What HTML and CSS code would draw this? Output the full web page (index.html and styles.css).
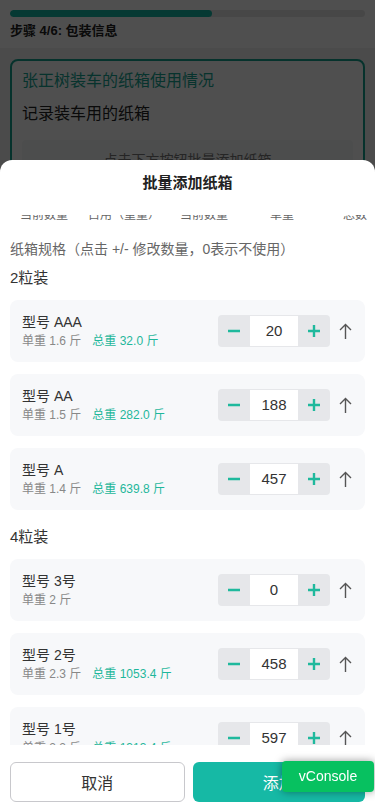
FILE: index.html
```html
<!DOCTYPE html>
<html lang="zh-CN">
<head>
<meta charset="utf-8">
<meta name="viewport" content="width=device-width, initial-scale=1">
<title>批量添加纸箱</title>
<link rel="stylesheet" href="styles.css">
</head>
<body>
<div class="page">
  <header class="topbar">
    <div class="progress"><div class="progress-fill" style="width:57%"></div></div>
    <div class="step">步骤 4/6: 包装信息</div>
  </header>
  <main class="content">
    <section class="info-card">
      <h2 class="info-title">张正树装车的纸箱使用情况</h2>
      <p class="info-sub">记录装车用的纸箱</p>
      <div class="info-box">点击下方按钮批量添加纸箱</div>
    </section>
  </main>
</div>

<div class="mask"></div>

<div class="sheet">
  <div class="sheet-head">批量添加纸箱</div>
  <div class="sheet-body">
    <div class="tabs">
      <span>当前数量</span>
      <span>占用（重量）</span>
      <span>当前数量</span>
      <span>单重</span>
      <span>总数</span>
    </div>
    <div class="hint">纸箱规格（点击 +/- 修改数量，0表示不使用）</div>

    <div class="group-title">2粒装</div>
    <div class="list">
      <div class="item">
        <div class="item-info">
          <div class="item-name">型号 AAA</div>
          <div class="item-sub"><span>单重 1.6 斤</span><span class="total">总重 32.0 斤</span></div>
        </div>
        <div class="stepper">
          <button class="step-btn"><svg width="12" height="12" viewBox="0 0 12 12"><path d="M0 6H12" stroke="currentColor" stroke-width="2.4"/></svg></button>
          <div class="step-val">20</div>
          <button class="step-btn"><svg width="12" height="12" viewBox="0 0 12 12"><path d="M0 6H12M6 0V12" stroke="currentColor" stroke-width="2.4"/></svg></button>
        </div>
        <svg class="up" width="13" height="16" viewBox="0 0 13 16"><path d="M6.5 1.5V16M1 7L6.5 1.5L12 7" fill="none" stroke="currentColor" stroke-width="1.4"/></svg>
      </div>
      <div class="item">
        <div class="item-info">
          <div class="item-name">型号 AA</div>
          <div class="item-sub"><span>单重 1.5 斤</span><span class="total">总重 282.0 斤</span></div>
        </div>
        <div class="stepper">
          <button class="step-btn"><svg width="12" height="12" viewBox="0 0 12 12"><path d="M0 6H12" stroke="currentColor" stroke-width="2.4"/></svg></button>
          <div class="step-val">188</div>
          <button class="step-btn"><svg width="12" height="12" viewBox="0 0 12 12"><path d="M0 6H12M6 0V12" stroke="currentColor" stroke-width="2.4"/></svg></button>
        </div>
        <svg class="up" width="13" height="16" viewBox="0 0 13 16"><path d="M6.5 1.5V16M1 7L6.5 1.5L12 7" fill="none" stroke="currentColor" stroke-width="1.4"/></svg>
      </div>
      <div class="item">
        <div class="item-info">
          <div class="item-name">型号 A</div>
          <div class="item-sub"><span>单重 1.4 斤</span><span class="total">总重 639.8 斤</span></div>
        </div>
        <div class="stepper">
          <button class="step-btn"><svg width="12" height="12" viewBox="0 0 12 12"><path d="M0 6H12" stroke="currentColor" stroke-width="2.4"/></svg></button>
          <div class="step-val">457</div>
          <button class="step-btn"><svg width="12" height="12" viewBox="0 0 12 12"><path d="M0 6H12M6 0V12" stroke="currentColor" stroke-width="2.4"/></svg></button>
        </div>
        <svg class="up" width="13" height="16" viewBox="0 0 13 16"><path d="M6.5 1.5V16M1 7L6.5 1.5L12 7" fill="none" stroke="currentColor" stroke-width="1.4"/></svg>
      </div>
    </div>

    <div class="group-title group-next">4粒装</div>
    <div class="list">
      <div class="item">
        <div class="item-info">
          <div class="item-name">型号 3号</div>
          <div class="item-sub"><span>单重 2 斤</span></div>
        </div>
        <div class="stepper">
          <button class="step-btn"><svg width="12" height="12" viewBox="0 0 12 12"><path d="M0 6H12" stroke="currentColor" stroke-width="2.4"/></svg></button>
          <div class="step-val">0</div>
          <button class="step-btn"><svg width="12" height="12" viewBox="0 0 12 12"><path d="M0 6H12M6 0V12" stroke="currentColor" stroke-width="2.4"/></svg></button>
        </div>
        <svg class="up" width="13" height="16" viewBox="0 0 13 16"><path d="M6.5 1.5V16M1 7L6.5 1.5L12 7" fill="none" stroke="currentColor" stroke-width="1.4"/></svg>
      </div>
      <div class="item">
        <div class="item-info">
          <div class="item-name">型号 2号</div>
          <div class="item-sub"><span>单重 2.3 斤</span><span class="total">总重 1053.4 斤</span></div>
        </div>
        <div class="stepper">
          <button class="step-btn"><svg width="12" height="12" viewBox="0 0 12 12"><path d="M0 6H12" stroke="currentColor" stroke-width="2.4"/></svg></button>
          <div class="step-val">458</div>
          <button class="step-btn"><svg width="12" height="12" viewBox="0 0 12 12"><path d="M0 6H12M6 0V12" stroke="currentColor" stroke-width="2.4"/></svg></button>
        </div>
        <svg class="up" width="13" height="16" viewBox="0 0 13 16"><path d="M6.5 1.5V16M1 7L6.5 1.5L12 7" fill="none" stroke="currentColor" stroke-width="1.4"/></svg>
      </div>
      <div class="item">
        <div class="item-info">
          <div class="item-name">型号 1号</div>
          <div class="item-sub"><span>单重 2.2 斤</span><span class="total">总重 1313.4 斤</span></div>
        </div>
        <div class="stepper">
          <button class="step-btn"><svg width="12" height="12" viewBox="0 0 12 12"><path d="M0 6H12" stroke="currentColor" stroke-width="2.4"/></svg></button>
          <div class="step-val">597</div>
          <button class="step-btn"><svg width="12" height="12" viewBox="0 0 12 12"><path d="M0 6H12M6 0V12" stroke="currentColor" stroke-width="2.4"/></svg></button>
        </div>
        <svg class="up" width="13" height="16" viewBox="0 0 13 16"><path d="M6.5 1.5V16M1 7L6.5 1.5L12 7" fill="none" stroke="currentColor" stroke-width="1.4"/></svg>
      </div>
    </div>
  </div>
  <div class="sheet-foot">
    <button class="btn btn-cancel">取消</button>
    <button class="btn btn-ok">添加</button>
  </div>
</div>

<div class="vconsole">vConsole</div>
</body>
</html>
```

FILE: styles.css
```css
* { box-sizing: border-box; }
html, body { margin: 0; padding: 0; }
body {
  width: 375px;
  height: 812px;
  overflow: hidden;
  background: #f0f0f2;
  font-family: "Liberation Sans", "Noto Sans CJK SC", sans-serif;
  color: #333;
}
button { font-family: inherit; border: 0; padding: 0; margin: 0; }

.page { height: 812px; }
.topbar {
  background: #fff;
  height: 48px;
  padding: 10px 10px 0;
}
.progress {
  height: 7px;
  border-radius: 4px;
  background: #e4e4e4;
  overflow: hidden;
}
.progress-fill {
  height: 100%;
  background: #14b8a6;
  border-radius: 4px;
}
.step {
  margin-top: 5px;
  font-size: 13px;
  line-height: 18px;
  font-weight: bold;
  color: #222;
}
.content { padding: 11px 10px; }
.info-card {
  background: #fff;
  border: 2px solid #14a38f;
  border-radius: 8px;
  padding: 8px 10px 20px;
}
.info-title {
  margin: 0;
  font-size: 16px;
  line-height: 24px;
  font-weight: normal;
  color: #17a693;
}
.info-sub {
  margin: 9px 0 0;
  font-size: 16px;
  line-height: 24px;
  color: #222;
}
.info-box {
  margin-top: 14px;
  height: 44px;
  background: #f6f7f7;
  border-radius: 4px;
  text-align: center;
  font-size: 14px;
  line-height: 40px;
  color: #777;
}

.mask {
  position: fixed;
  inset: 0;
  background: rgba(0, 0, 0, 0.69);
}

.sheet {
  position: fixed;
  left: 0;
  right: 0;
  bottom: 0;
  height: 652px;
  background: #fff;
  border-radius: 12px 12px 0 0;
  display: flex;
  flex-direction: column;
}
.sheet-head {
  height: 55px;
  padding-top: 11px;
  text-align: center;
  font-size: 15px;
  line-height: 24px;
  font-weight: bold;
  color: #222;
}
.sheet-body {
  flex: 1;
  overflow: hidden;
  padding: 0 10px;
}
.tabs {
  margin-top: -10px;
  height: 20px;
  display: grid;
  grid-template-columns: 68px 92px 90px 73px 1fr;
  padding-left: 10px;
  font-size: 12px;
  line-height: 20px;
  color: #666;
  white-space: nowrap;
}
.hint {
  margin-top: 14px;
  font-size: 14px;
  line-height: 20px;
  color: #666;
}
.group-title {
  margin-top: 8px;
  font-size: 15px;
  line-height: 22px;
  color: #333;
}
.group-next { margin-top: 16px; }
.list {
  margin-top: 11px;
  display: flex;
  flex-direction: column;
  gap: 12px;
}
.item {
  height: 62px;
  background: #f7f8fa;
  border-radius: 8px;
  padding: 12px 13px 12px 12px;
  display: flex;
  align-items: center;
}
.item-info { flex: 1; min-width: 0; }
.item-name {
  font-size: 14px;
  line-height: 20px;
  color: #333;
}
.item-sub {
  font-size: 12px;
  line-height: 18px;
  color: #888;
  display: flex;
  gap: 11px;
  white-space: nowrap;
}
.item-sub .total { color: #1fb79b; }
.stepper {
  display: flex;
  width: 112px;
  height: 32px;
  background: #e6e7ea;
  border-radius: 4px;
  overflow: hidden;
}
.step-btn {
  width: 32px;
  height: 32px;
  background: transparent;
  color: #1fb99d;
  display: flex;
  align-items: center;
  justify-content: center;
}
.step-val {
  width: 48px;
  margin: 1px 0;
  background: #fff;
  text-align: center;
  font-size: 15px;
  line-height: 30px;
  color: #333;
}
.up {
  margin-left: 9px;
  color: #555;
  flex: none;
}

.sheet-foot {
  height: 67px;
  padding: 17px 10px 10px;
  display: flex;
  gap: 8px;
}
.btn {
  flex: 1;
  height: 40px;
  border-radius: 6px;
  font-size: 16px;
}
.btn-cancel {
  background: #fff;
  border: 1px solid #c8c8cc;
  color: #333;
}
.btn-ok {
  background: #16b9a5;
  color: #fff;
}

.vconsole {
  position: fixed;
  left: 282px;
  top: 761px;
  width: 92px;
  height: 31px;
  background: #07c160;
  border-radius: 4px;
  box-shadow: 0 0 8px rgba(0, 0, 0, 0.4);
  color: #fff;
  font-size: 14px;
  line-height: 31px;
  text-align: center;
}
```
